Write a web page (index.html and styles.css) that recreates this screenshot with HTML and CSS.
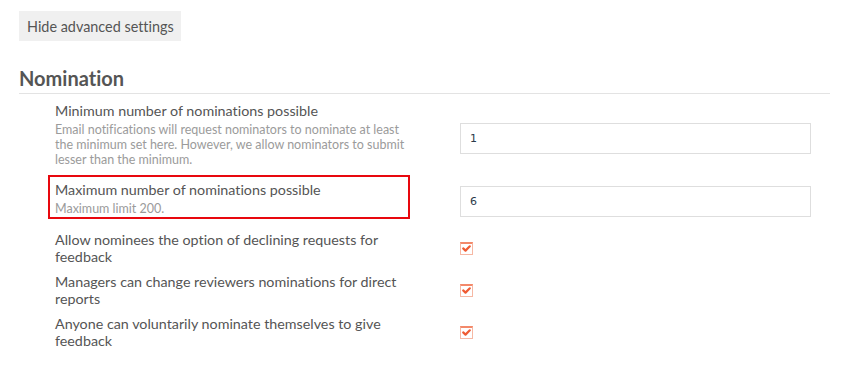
FILE: index.html
```html
<!DOCTYPE html>
<html lang="en">
<head>
<meta charset="utf-8">
<title>Nomination settings</title>
<link rel="stylesheet" href="styles.css">
</head>
<body>
<div class="page">
  <button class="btn" type="button">Hide advanced settings</button>
  <h2 class="section-title">Nomination</h2>
  <div class="rows">
    <div class="row">
      <div class="label-cell">
        <div class="label">Minimum number of nominations possible</div>
        <div class="desc">Email notifications will request nominators to nominate at least the minimum set here. However, we allow nominators to submit lesser than the minimum.</div>
      </div>
      <input class="num-input" type="text" value="1">
    </div>
    <div class="row row-highlight">
      <div class="label-cell highlighted">
        <div class="label">Maximum number of nominations possible</div>
        <div class="desc">Maximum limit 200.</div>
      </div>
      <input class="num-input" type="text" value="6">
    </div>
    <div class="row">
      <div class="label-cell">
        <div class="label">Allow nominees the option of declining requests for feedback</div>
      </div>
      <span class="check"><svg viewBox="0 0 13 13" width="13" height="13"><path d="M3.2 6.4 L5.5 8.6 L9.8 4.3" fill="none" stroke="#ef5b33" stroke-width="2.2" stroke-linecap="round" stroke-linejoin="round"/></svg></span>
    </div>
    <div class="row">
      <div class="label-cell">
        <div class="label">Managers can change reviewers nominations for direct reports</div>
      </div>
      <span class="check"><svg viewBox="0 0 13 13" width="13" height="13"><path d="M3.2 6.4 L5.5 8.6 L9.8 4.3" fill="none" stroke="#ef5b33" stroke-width="2.2" stroke-linecap="round" stroke-linejoin="round"/></svg></span>
    </div>
    <div class="row">
      <div class="label-cell">
        <div class="label">Anyone can voluntarily nominate themselves to give feedback</div>
      </div>
      <span class="check"><svg viewBox="0 0 13 13" width="13" height="13"><path d="M3.2 6.4 L5.5 8.6 L9.8 4.3" fill="none" stroke="#ef5b33" stroke-width="2.2" stroke-linecap="round" stroke-linejoin="round"/></svg></span>
    </div>
  </div>
</div>
</body>
</html>
```

FILE: styles.css
```css
html, body {
  margin: 0;
  padding: 0;
  background: #ffffff;
}

body {
  font-family: Lato, "Open Sans", "Liberation Sans", sans-serif;
  color: #555555;
  font-variant-ligatures: none;
}

.page {
  padding: 11px 0 0 19px;
  width: 811px;
}

.btn {
  display: block;
  height: 30px;
  margin: 0;
  padding: 1px 7px 0 8px;
  border: none;
  background: #f0f0f0;
  color: #555555;
  font-family: Lato, "Open Sans", "Liberation Sans", sans-serif;
  font-variant-ligatures: none;
  font-size: 14.4px;
  line-height: 29px;
  cursor: pointer;
}

.section-title {
  margin: 25px 0 0 0;
  padding: 0 0 2px 0;
  font-size: 20px;
  line-height: 25px;
  font-weight: 700;
  color: #555555;
  border-bottom: 1px solid #e3e3e3;
}

.rows {
  display: flex;
  flex-direction: column;
  gap: 8px;
  margin-top: 8px;
}

.row {
  display: flex;
  align-items: center;
}

.row-highlight {
  margin-bottom: 4px;
}

.label-cell {
  width: 355px;
  margin-left: 36px;
  margin-right: 50px;
  box-sizing: border-box;
}

.label-cell.highlighted {
  width: 362px;
  margin-left: 29px;
  margin-right: 50px;
  border: 2px solid #e8080e;
  padding: 4px 5px 1px 5px;
}

.label {
  font-size: 14.3px;
  line-height: 17px;
  color: #555555;
}

.desc {
  margin-top: 3px;
  font-size: 12.5px;
  line-height: 15px;
  color: #9b9b9b;
}

.num-input {
  width: 351px;
  height: 31px;
  margin: 8px 0 0 0;
  padding: 0 9px;
  box-sizing: border-box;
  border: 1px solid #dedede;
  background: #ffffff;
  font-family: "DejaVu Sans", sans-serif;
  font-size: 11px;
  color: #2b3a4a;
  outline: none;
}

.check {
  display: block;
  width: 13px;
  height: 13px;
  box-sizing: border-box;
  border: 1px solid #f6b8a4;
  border-top: 2px solid #f3896a;
  position: relative;
}

.check svg {
  position: absolute;
  left: -1px;
  top: -2px;
}
```
